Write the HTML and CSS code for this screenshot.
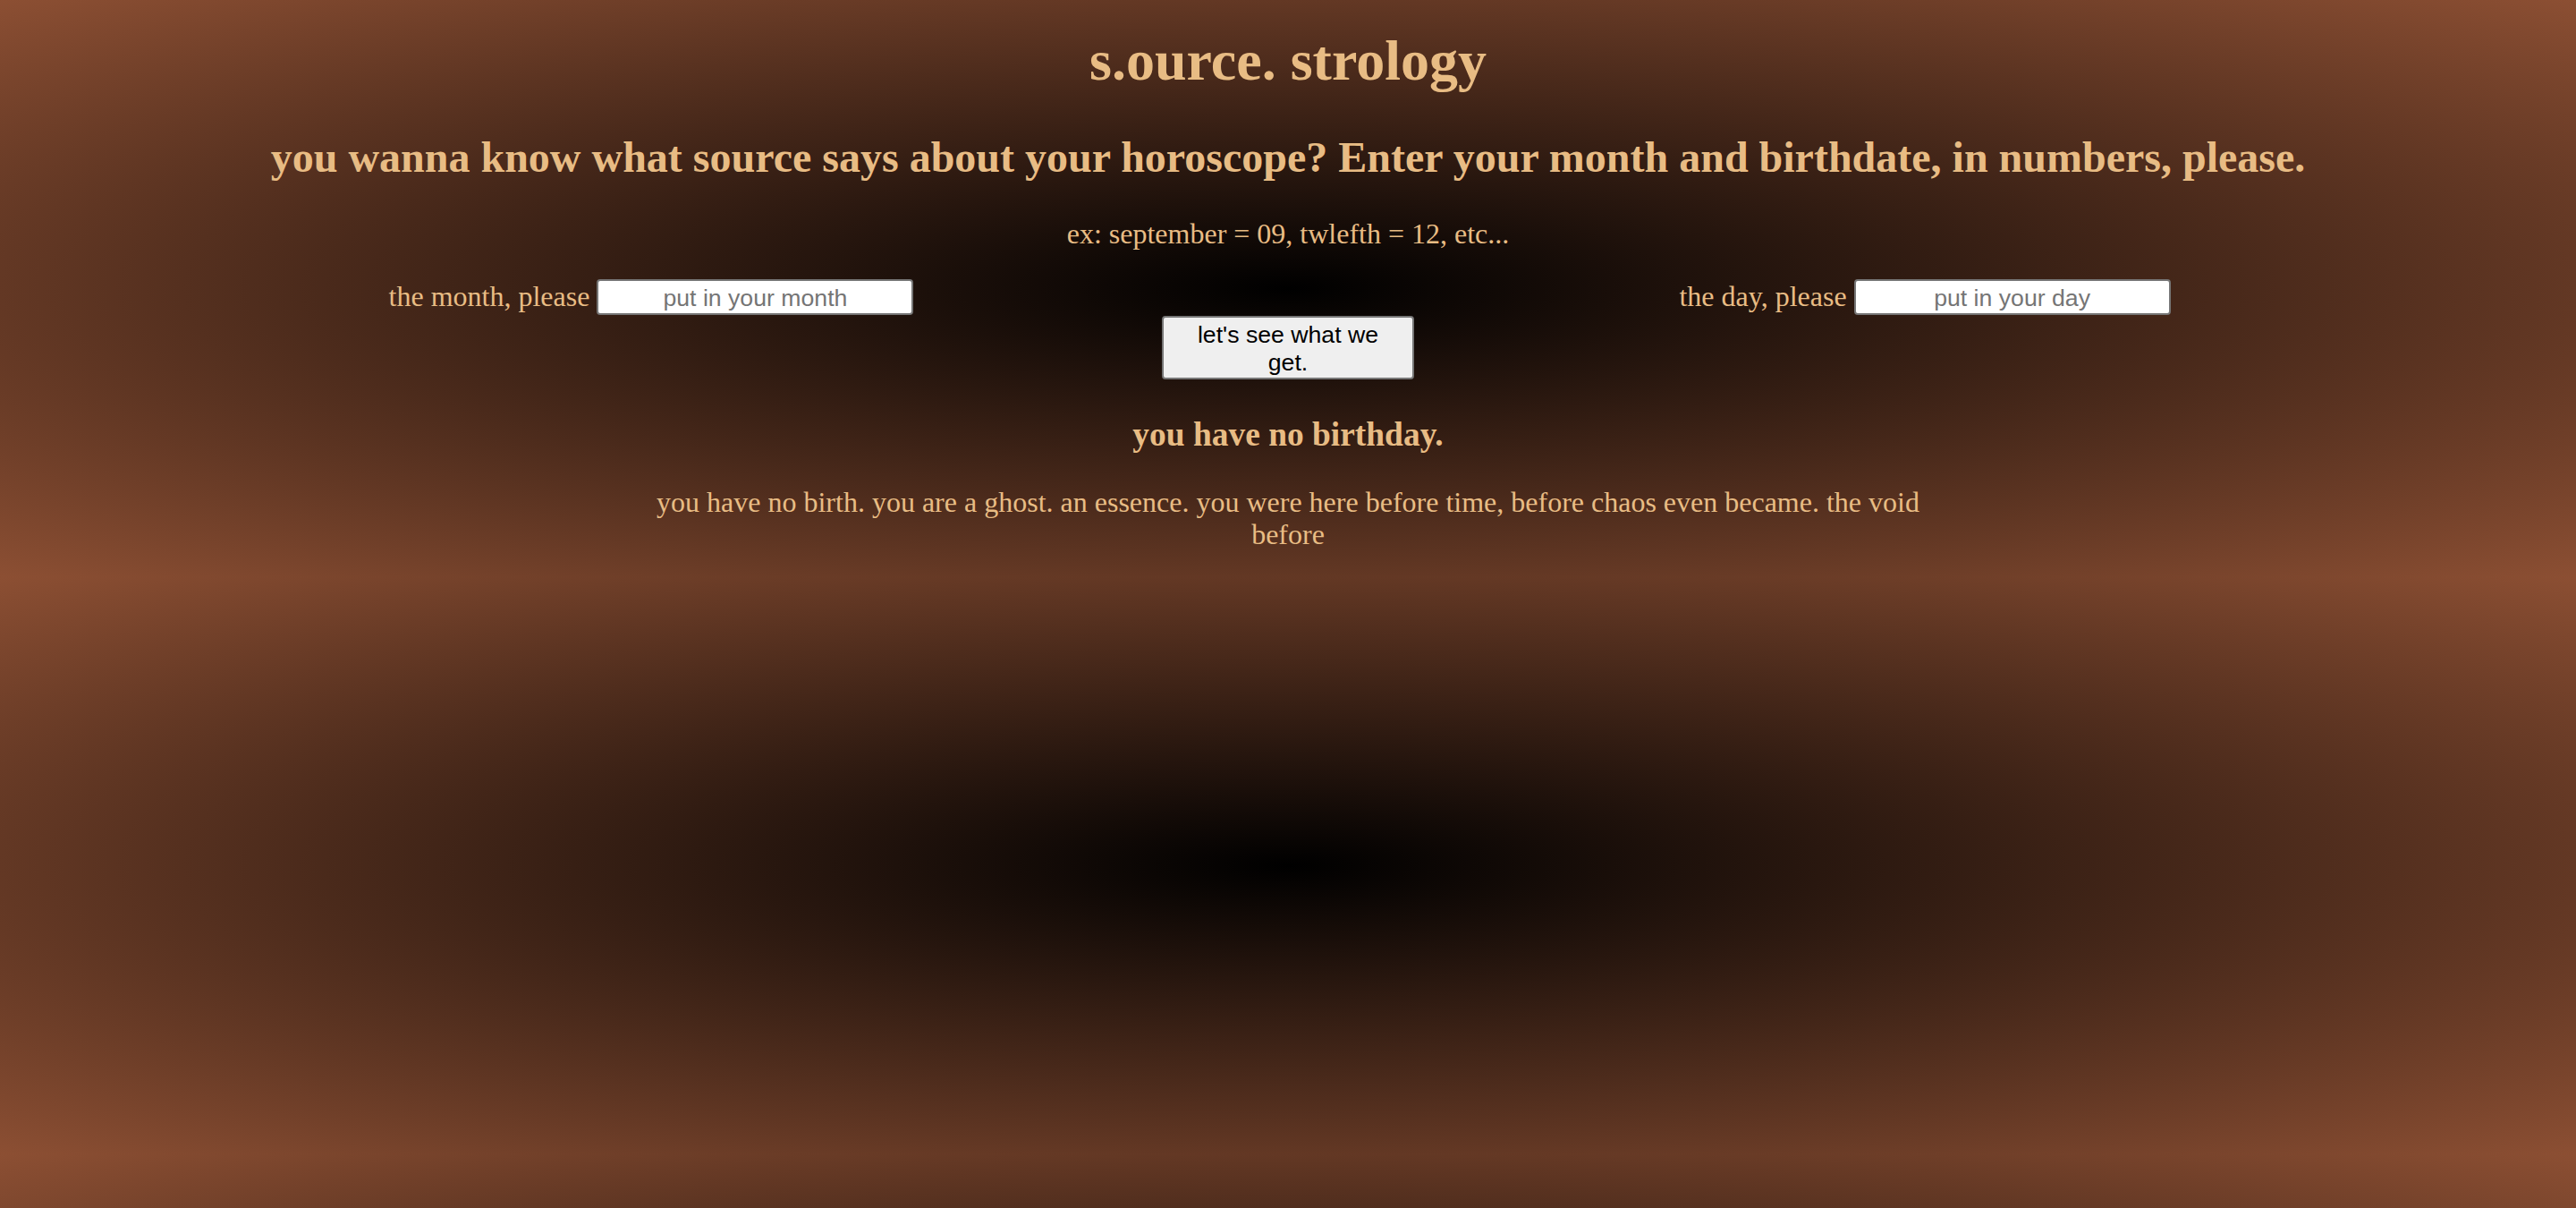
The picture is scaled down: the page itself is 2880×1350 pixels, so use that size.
FILE: index.html
```html
<!DOCTYPE html>
<html lang="en">
<head>
<meta charset="utf-8">
<title>s.ource. strology</title>
<link rel="stylesheet" href="styles.css">
</head>
<body>
<main class="page">
  <h1 class="title">s.ource. strology</h1>
  <h2 class="lead">you wanna know what source says about your horoscope? Enter your month and birthdate, in numbers, please.</h2>
  <p class="hint">ex: september = 09, twlefth = 12, etc...</p>
  <div class="fields">
    <div class="field"><label class="field-label" for="month">the month, please</label> <input class="field-input" id="month" type="text" placeholder="put in your month"></div>
    <div class="field"><label class="field-label" for="day">the day, please</label> <input class="field-input" id="day" type="text" placeholder="put in your day"></div>
  </div>
  <div class="actions"><button class="go" type="button">let's see what we get.</button></div>
  <section class="result">
    <h3 class="result-title">you have no birthday.</h3>
    <p class="result-text">you have no birth. you are a ghost. an essence. you were here before time, before chaos even became. the void before</p>
  </section>
</main>
</body>
</html>
```
FILE: styles.css
```css
html {
  background-color: #000;
  background-image: radial-gradient(#000000, #8c4f33);
  background-size: 100% 645px;
  background-repeat: repeat;
  background-position: 0 0;
  min-height: 100%;
}

body {
  margin: 0;
  font-family: "Liberation Serif", "Times New Roman", serif;
  color: #e8bc84;
}

.page {
  padding: 0 16px;
  text-align: center;
}

.title {
  font-size: 64px;
  font-weight: bold;
  line-height: normal;
  margin: 31px 0 43px;
}

.lead {
  font-size: 48px;
  font-weight: bold;
  line-height: normal;
  margin: 0 0 40px;
}

.hint {
  font-size: 32px;
  line-height: normal;
  margin: 0 0 32px;
}

.fields {
  display: grid;
  grid-template-columns: 1fr 1fr;
  font-size: 32px;
  line-height: normal;
}

.field {
  text-align: center;
}

.field-input {
  box-sizing: border-box;
  width: 354px;
  height: 40px;
  padding: 3px 4px 1px;
  border: 2px solid #767676;
  border-radius: 4px;
  background: #fff;
  font-family: "Liberation Sans", Arial, sans-serif;
  font-size: 26.67px;
  text-align: center;
  color: #000;
}

.field-input::placeholder {
  color: #757575;
}

.actions {
  display: flex;
  justify-content: center;
  margin-top: 1px;
}

.go {
  box-sizing: border-box;
  width: 282px;
  height: 71px;
  padding: 4px 18px 2px;
  border: 2px solid #767676;
  border-radius: 4px;
  background: #efefef;
  color: #000;
  font-family: "Liberation Sans", Arial, sans-serif;
  font-size: 26.67px;
  line-height: normal;
}

.result-title {
  font-size: 37.44px;
  font-weight: bold;
  line-height: normal;
  margin: 40px 0 36px;
}

.result-text {
  width: 1424px;
  margin: 0 auto 32px;
  font-size: 32px;
  line-height: 36px;
}
```
